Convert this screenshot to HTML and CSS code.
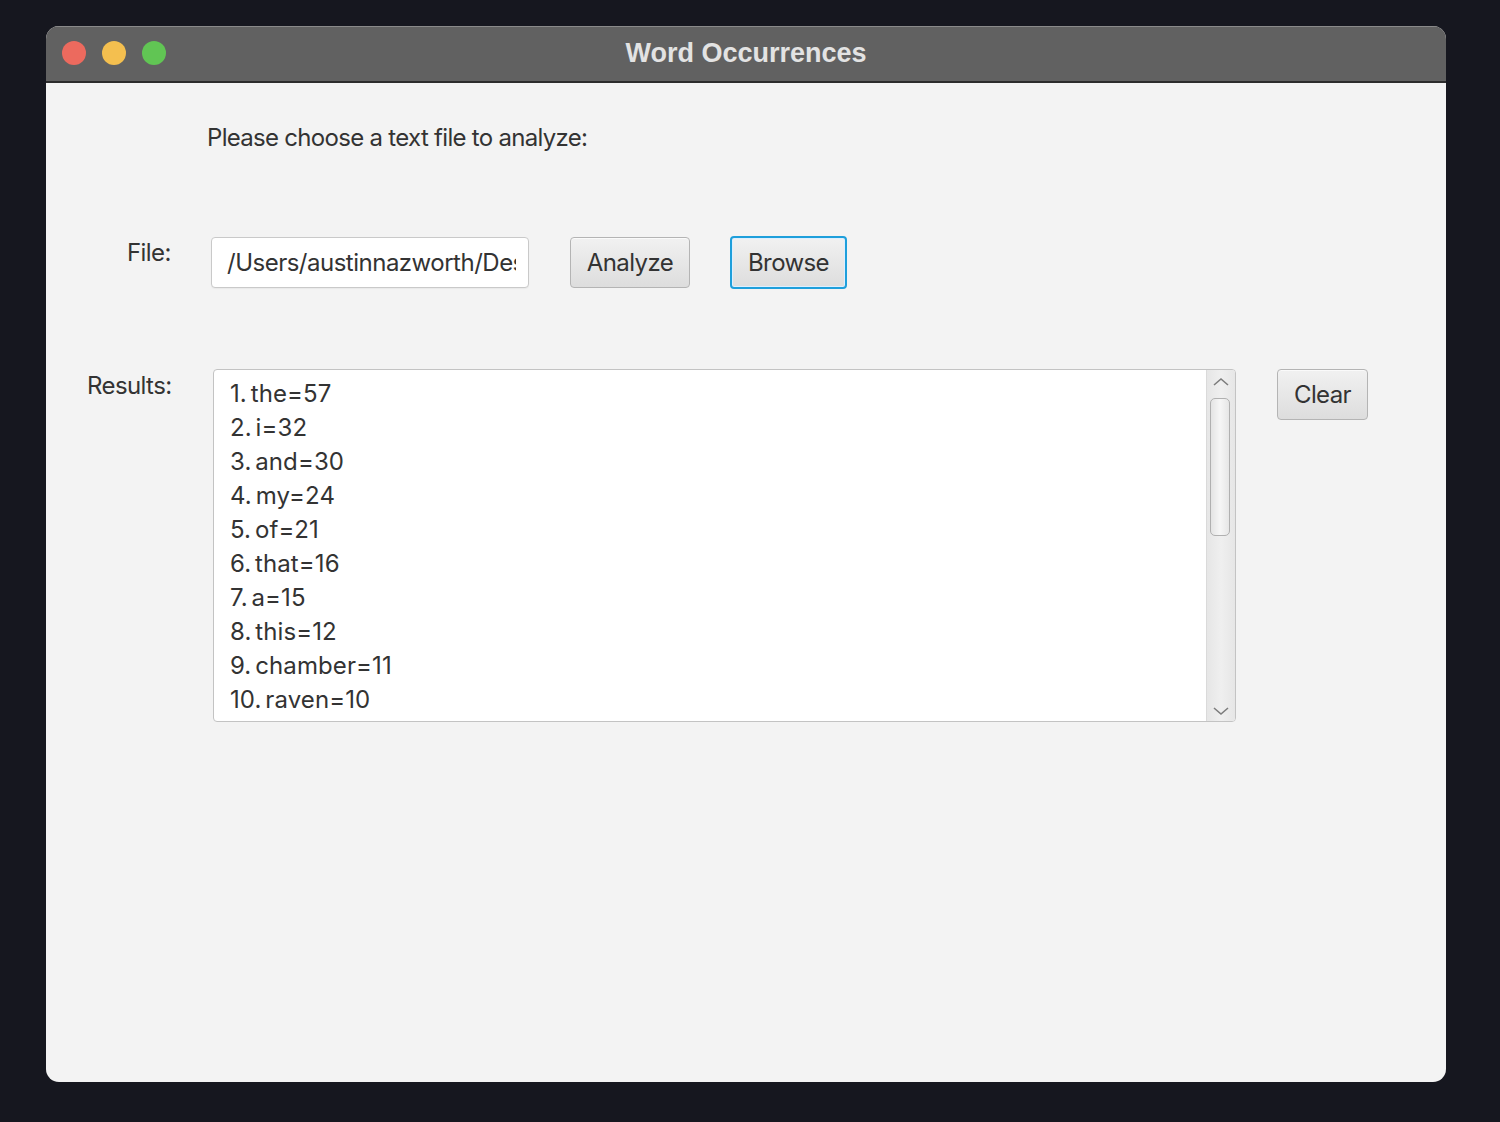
FILE: index.html
```html
<!DOCTYPE html>
<html>
<head>
<meta charset="utf-8">
<link rel="stylesheet" href="styles.css">
</head>
<body>
<div class="window">
  <div class="titlebar">
    <div class="lights">
      <span class="light red"></span>
      <span class="light yellow"></span>
      <span class="light green"></span>
    </div>
    <div class="title">Word Occurrences</div>
  </div>
  <div class="content">
    <div class="prompt">Please choose a text file to analyze:</div>
    <div class="file-row">
      <div class="label file-label">File:</div>
      <div class="field"><div class="field-text">/Users/austinnazworth/Desktop/raven.txt</div></div>
      <button class="btn analyze">Analyze</button>
      <button class="btn browse">Browse</button>
    </div>
    <div class="results-row">
      <div class="label results-label">Results:</div>
      <div class="textarea">
        <div class="lines">
          <div>1. the=57</div>
          <div>2. i=32</div>
          <div>3. and=30</div>
          <div>4. my=24</div>
          <div>5. of=21</div>
          <div>6. that=16</div>
          <div>7. a=15</div>
          <div>8. this=12</div>
          <div>9. chamber=11</div>
          <div>10. raven=10</div>
        </div>
        <div class="scrollbar">
          <svg class="arrow" width="18" height="12" viewBox="0 0 18 12"><path d="M2 9 L9 3 L16 9" fill="none" stroke="#7d7d7d" stroke-width="1.6"/></svg>
          <div class="track"><div class="thumb"></div></div>
          <svg class="arrow" width="18" height="12" viewBox="0 0 18 12"><path d="M2 3 L9 9 L16 3" fill="none" stroke="#7d7d7d" stroke-width="1.6"/></svg>
        </div>
      </div>
      <button class="btn clear">Clear</button>
    </div>
  </div>
</div>
</body>
</html>
```
FILE: styles.css
```css
* { box-sizing: border-box; }
html, body { margin: 0; padding: 0; }
body {
  background: #16171f;
  width: 1500px;
  height: 1122px;
  padding: 26px 0 0 46px;
  font-family: Inter, "Noto Sans", sans-serif;
  color: #333333;
}
.window {
  width: 1400px;
  height: 1056px;
  border-radius: 13px;
  overflow: hidden;
  background: #f3f3f3;
  display: flex;
  flex-direction: column;
}
.titlebar {
  height: 57px;
  flex: none;
  background: #616161;
  border-top: 1px solid #8a8a8a;
  border-bottom: 2px solid #2c2c2c;
  position: relative;
  display: flex;
  align-items: center;
  justify-content: center;
}
.lights {
  position: absolute;
  left: 16px;
  top: 14px;
  display: flex;
  gap: 16px;
}
.light {
  width: 24px;
  height: 24px;
  border-radius: 50%;
  display: block;
}
.red { background: #ec6a5e; }
.yellow { background: #f4bf4f; }
.green { background: #61c554; }
.title {
  font-family: "Liberation Sans", Arial, sans-serif;
  font-weight: bold;
  font-size: 27px;
  color: #e3e3e3;
  margin-top: -1px;
}
.content {
  flex: 1;
  display: flex;
  flex-direction: column;
}
.prompt {
  font-size: 24px;
  line-height: 30px;
  letter-spacing: -0.7px;
  margin: 40px 0 0 161px;
}
.file-row {
  display: flex;
  align-items: flex-start;
  margin-top: 84px;
  padding-left: 81px;
}
.label {
  font-size: 24px;
  line-height: 30px;
  letter-spacing: -0.6px;
}
.file-label {
  width: 84px;
  margin-top: 1px;
}
.field {
  width: 318px;
  height: 51px;
  background: #ffffff;
  border: 1px solid #c9c9c9;
  border-radius: 4px;
  padding: 0 12px 0 15px;
  box-shadow: 0 1px 1px rgba(0,0,0,0.04);
}
.field-text {
  font-size: 24px;
  letter-spacing: -0.5px;
  line-height: 49px;
  white-space: nowrap;
  overflow: hidden;
}
.btn {
  font-family: Inter, "Noto Sans", sans-serif;
  font-size: 24px;
  letter-spacing: -0.6px;
  color: #333333;
  height: 51px;
  border: 1px solid #b4b4b4;
  border-radius: 4px;
  background: linear-gradient(#f1f1f1, #dddddd);
  box-shadow: inset 0 1px 0 #fafafa;
  padding: 0;
  margin: 0;
}
.analyze {
  width: 120px;
  margin-left: 41px;
}
.browse {
  width: 117px;
  height: 53px;
  margin-top: -1px;
  margin-left: 40px;
  border: 2px solid #1e9fdb;
  box-shadow: inset 0 0 0 1px #dcefff;
}
.results-row {
  display: flex;
  align-items: flex-start;
  margin-top: 80px;
  padding-left: 41px;
}
.results-label {
  width: 126px;
  margin-top: 2px;
}
.textarea {
  width: 1023px;
  height: 353px;
  background: #ffffff;
  border: 1px solid #c3c3c3;
  border-radius: 4px;
  display: flex;
  overflow: hidden;
}
.lines {
  flex: 1;
  padding: 7px 0 0 16px;
  font-size: 24px;
  line-height: 34px;
  letter-spacing: 0.1px;
  word-spacing: -3px;
}
.scrollbar {
  width: 29px;
  flex: none;
  background: linear-gradient(90deg, #e6e6e6, #efefef 50%, #e6e6e6);
  border-left: 1px solid #dadada;
  display: flex;
  flex-direction: column;
  align-items: center;
}
.arrow {
  flex: none;
  margin-top: 6px;
}
.scrollbar .arrow:last-child {
  margin-top: 0;
  margin-bottom: 4px;
}
.track {
  flex: 1;
  width: 100%;
  padding: 10px 4px 0 3px;
}
.thumb {
  width: 20px;
  height: 138px;
  border: 1px solid #b0b0b0;
  border-radius: 5px;
  background: linear-gradient(90deg, #e4e4e4, #f6f6f6 50%, #e6e6e6);
}
.clear {
  width: 91px;
  margin-left: 41px;
}
```
